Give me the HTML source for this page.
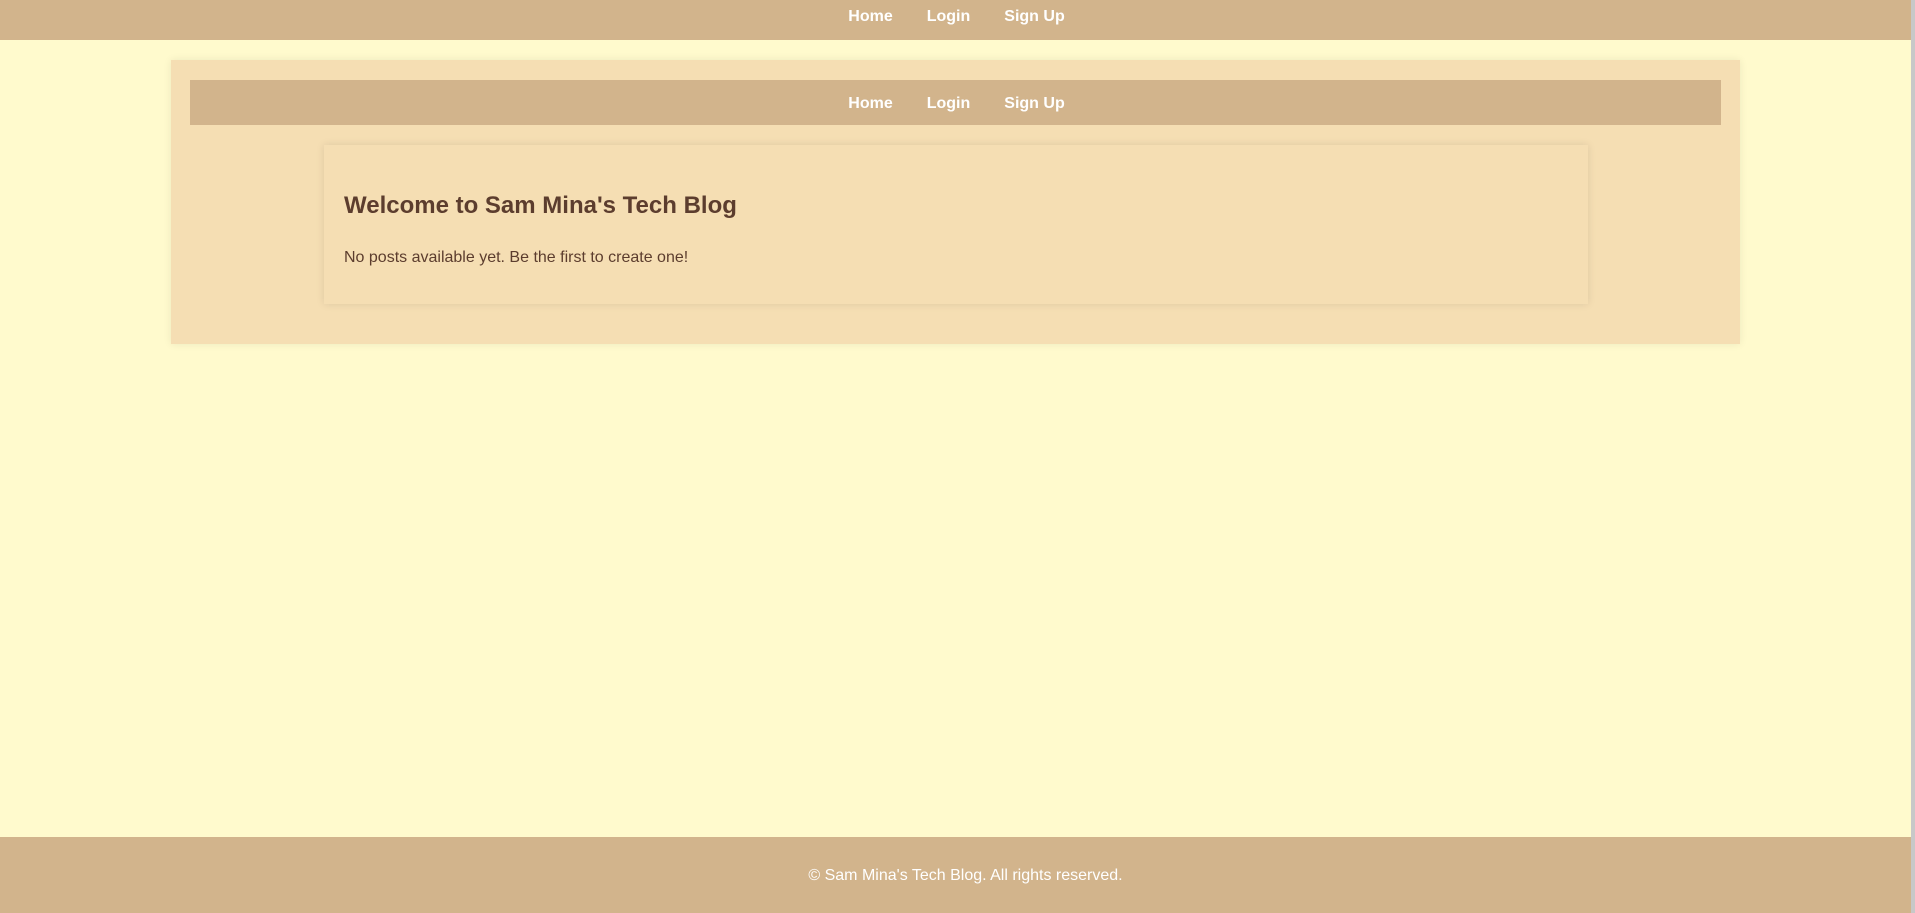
<!DOCTYPE html>
<html><head><meta charset="utf-8"><style>
*{box-sizing:border-box;margin:0;padding:0}
html,body{width:1915px;height:913px;overflow:hidden}
body{background:#FFFACD;font-family:"Liberation Sans",Arial,sans-serif;position:relative}
.nav{background:#D2B48C;display:flex;justify-content:center;align-items:center}
.nav a{color:#fff;font-weight:bold;font-size:16px;text-decoration:none;margin:0 17px}
#top{position:absolute;left:0;top:0;width:1911px;height:40px;align-items:flex-start;padding-top:8px;padding-left:2px}
#outer{position:absolute;left:171px;top:60px;width:1569px;height:284px;background:#F5DEB3;box-shadow:0 0 8px rgba(0,0,0,0.08)}
#inner{position:absolute;left:19px;top:20px;width:1531px;height:45px;padding-left:2px;padding-top:2px}
#card{position:absolute;left:153px;top:85px;width:1264px;height:159px;background:#F5DEB3;box-shadow:0 0 8px rgba(0,0,0,0.1);padding:0 20px;color:#5C3D2E}
#card h2{position:absolute;left:20px;top:47px;font-size:24px;font-weight:bold}
#card p{position:absolute;left:20px;top:104px;font-size:16px}
#foot{position:absolute;left:0;top:837px;width:1911px;height:76px;background:#D2B48C;color:#fff;font-size:16px;text-align:center;line-height:76px;padding-left:20px;padding-top:1px}
#sb{position:absolute;left:1911px;top:0;width:4px;height:913px;background:#c8c8c8}
</style></head><body>
<div class="nav" id="top"><a>Home</a><a>Login</a><a>Sign Up</a></div>
<div id="outer">
<div class="nav" id="inner"><a>Home</a><a>Login</a><a>Sign Up</a></div>
<div id="card"><h2>Welcome to Sam Mina's Tech Blog</h2><p>No posts available yet. Be the first to create one!</p></div>
</div>
<div id="foot">© Sam Mina's Tech Blog. All rights reserved.</div>
<div id="sb"></div>
</body></html>
